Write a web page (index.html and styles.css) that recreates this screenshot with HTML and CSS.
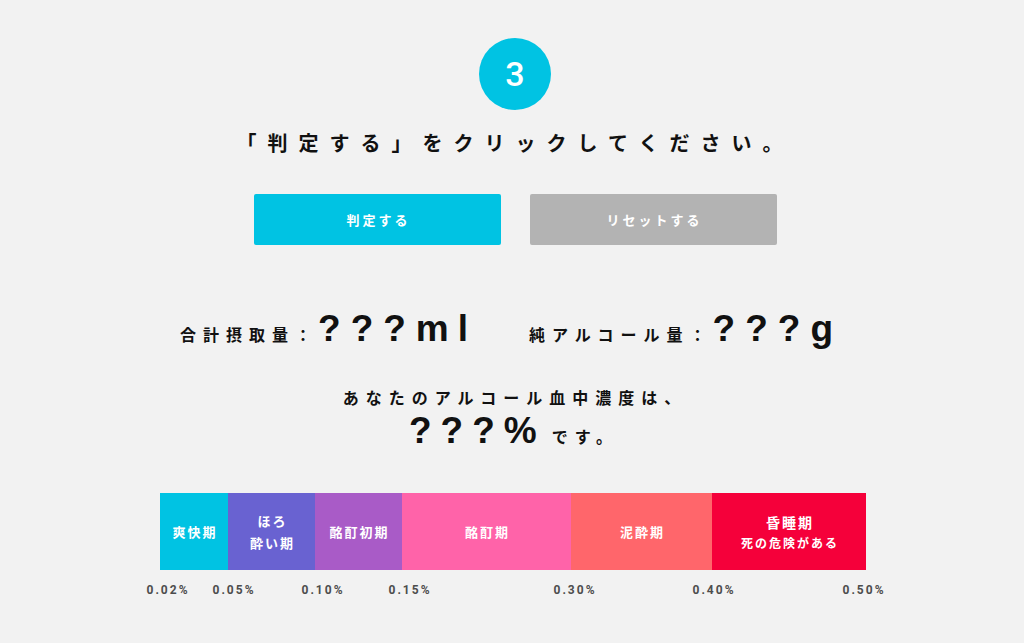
FILE: index.html
```html
<!DOCTYPE html>
<html lang="ja">
<head>
<meta charset="utf-8">
<title>判定</title>
<link rel="stylesheet" href="styles.css">
</head>
<body>
<main class="page">
  <div class="step">3</div>
  <h2 class="lead">「判定する」をクリックしてください。</h2>
  <div class="buttons">
    <button class="btn btn-judge">判定する</button>
    <button class="btn btn-reset">リセットする</button>
  </div>
  <div class="totals">
    <div class="total"><span class="label">合計摂取量：</span><span class="big">???<span class="unit">ml</span></span></div>
    <div class="total"><span class="label">純アルコール量：</span><span class="big">???<span class="unit">g</span></span></div>
  </div>
  <p class="bac-lead">あなたのアルコール血中濃度は、</p>
  <p class="bac"><span class="big">???%</span><span class="desu">です。</span></p>
  <div class="scale">
    <div class="bar">
      <div class="seg s1" style="width:68px">爽快期</div>
      <div class="seg s2" style="width:87px"><span>ほろ<br>酔い期</span></div>
      <div class="seg s3" style="width:87px">酩酊初期</div>
      <div class="seg s4" style="width:169px">酩酊期</div>
      <div class="seg s5" style="width:141px">泥酔期</div>
      <div class="seg s6" style="width:154px"><span class="stack"><span class="t1">昏睡期</span><span class="t2">死の危険がある</span></span></div>
    </div>
    <div class="ticks">
      <span class="tick" style="left:8px">0.02%</span>
      <span class="tick" style="left:74px">0.05%</span>
      <span class="tick" style="left:163px">0.10%</span>
      <span class="tick" style="left:250px">0.15%</span>
      <span class="tick" style="left:415px">0.30%</span>
      <span class="tick" style="left:554px">0.40%</span>
      <span class="tick" style="left:704px">0.50%</span>
    </div>
  </div>
</main>
</body>
</html>
```
FILE: styles.css
```css
html, body {
  margin: 0;
  padding: 0;
  background: #f2f2f2;
}
body {
  font-family: "Noto Sans CJK JP", "Noto Sans", sans-serif;
  color: #111;
}
.page {
  width: 1024px;
  height: 643px;
  display: flex;
  flex-direction: column;
  align-items: center;
  padding-top: 38px;
  padding-left: 6px;
  box-sizing: border-box;
}
.step {
  width: 72px;
  height: 72px;
  border-radius: 50%;
  background: #00c3e3;
  color: #fff;
  font-family: "Roboto", "Noto Sans", sans-serif;
  font-weight: 500;
  font-size: 34px;
  line-height: 72px;
  text-align: center;
}
.lead {
  margin: 18px 0 0;
  font-size: 20px;
  line-height: 30px;
  font-weight: 700;
  letter-spacing: 11px;
}
.buttons {
  display: flex;
  gap: 29px;
  margin-top: 36px;
}
.btn {
  width: 247px;
  height: 51px;
  border: none;
  border-radius: 2px;
  color: #fff;
  font-family: "Noto Sans CJK JP", sans-serif;
  font-weight: 700;
  font-size: 13px;
  letter-spacing: 3px;
  padding: 0 0 0 3px;
}
.btn-judge { background: #00c3e3; }
.btn-reset { background: #b3b3b3; }
.totals {
  display: flex;
  gap: 52px;
  margin-top: 62px;
  height: 44px;
  align-items: baseline;
  padding-right: 8px;
}
.total {
  display: flex;
  align-items: baseline;
}
.label {
  font-size: 16px;
  font-weight: 700;
  letter-spacing: 7px;
}
.big {
  font-family: "Liberation Sans", "Noto Sans", sans-serif;
  font-weight: 700;
  font-size: 37px;
  letter-spacing: 10px;
  line-height: 44px;
}
.unit {
  letter-spacing: 9px;
}
.bac-lead {
  margin: 34px 0 0;
  font-size: 16px;
  line-height: 24px;
  font-weight: 700;
  letter-spacing: 7px;
}
.bac {
  margin: 0;
  display: flex;
  align-items: baseline;
  line-height: 44px;
  padding-right: 2px;
}
.bac .big {
  letter-spacing: 9px;
}
.desu {
  font-size: 16px;
  font-weight: 700;
  letter-spacing: 7px;
  margin-left: 6px;
}
.scale {
  width: 706px;
  margin-top: 35px;
  margin-left: -4px;
}
.bar {
  display: flex;
  height: 77px;
}
.seg {
  display: flex;
  align-items: center;
  justify-content: center;
  text-align: center;
  color: #fff;
  font-weight: 700;
  font-size: 13px;
  line-height: 22px;
  letter-spacing: 2px;
  padding-left: 2px;
  box-sizing: border-box;
}
.s1 { background: #00c3e3; }
.s2 { background: #6962d1; }
.s3 { background: #a95bc7; }
.s4 { background: #ff63a9; }
.s5 { background: #ff666b; }
.s6 { background: #f5003a; }
.stack {
  display: flex;
  flex-direction: column;
  align-items: center;
}
.t1 { font-size: 14px; line-height: 22px; }
.t2 { font-size: 12px; line-height: 20px; }
.ticks {
  position: relative;
  height: 20px;
  margin-top: 12px;
}
.tick {
  position: absolute;
  top: 0;
  transform: translateX(-50%);
  font-family: "Roboto", "Noto Sans", sans-serif;
  font-weight: 700;
  font-size: 12px;
  line-height: 16px;
  letter-spacing: 2px;
  color: #4d4d4d;
  white-space: nowrap;
}
```
